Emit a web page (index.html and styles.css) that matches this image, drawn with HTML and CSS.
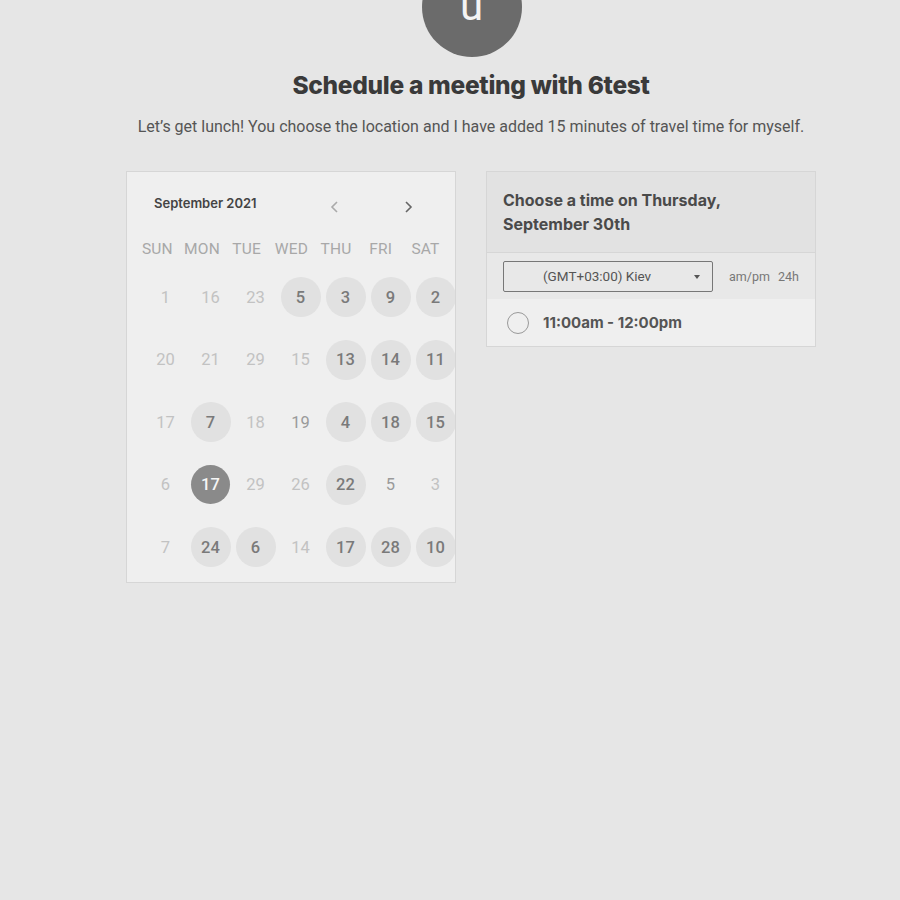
FILE: index.html
```html
<!DOCTYPE html>
<html>
<head>
<meta charset="utf-8">
<link rel="stylesheet" href="styles.css">
</head>
<body>
<div class="page">
  <div class="avatar"><span>u</span></div>
  <h1 class="title">Schedule a meeting with 6test</h1>
  <p class="subtitle">Let’s get lunch! You choose the location and I have added 15 minutes of travel time for myself.</p>
  <div class="cols">
    <div class="cal">
      <div class="cal-head">
        <span class="month">September 2021</span>
        <span class="arrow prev"><svg width="12" height="14" viewBox="0 0 12 14"><path d="M8 2 L3 7 L8 12" fill="none" stroke="#aaa" stroke-width="1.6"/></svg></span>
        <span class="arrow next"><svg width="12" height="14" viewBox="0 0 12 14"><path d="M4 2 L9 7 L4 12" fill="none" stroke="#666" stroke-width="1.6"/></svg></span>
      </div>
      <div class="dow">
        <span>SUN</span><span>MON</span><span>TUE</span><span>WED</span><span>THU</span><span>FRI</span><span>SAT</span>
      </div>
      <div class="days">
        <span class="d off">1</span><span class="d off">16</span><span class="d off">23</span><span class="d av">5</span><span class="d av">3</span><span class="d av">9</span><span class="d av">2</span>
        <span class="d off">20</span><span class="d off">21</span><span class="d off">29</span><span class="d off">15</span><span class="d av">13</span><span class="d av">14</span><span class="d av">11</span>
        <span class="d off">17</span><span class="d av">7</span><span class="d off">18</span><span class="d mid">19</span><span class="d av">4</span><span class="d av">18</span><span class="d av">15</span>
        <span class="d off">6</span><span class="d sel">17</span><span class="d off">29</span><span class="d off">26</span><span class="d av">22</span><span class="d mid">5</span><span class="d off">3</span>
        <span class="d off">7</span><span class="d av">24</span><span class="d av">6</span><span class="d off">14</span><span class="d av">17</span><span class="d av">28</span><span class="d av">10</span>
      </div>
    </div>
    <div class="times">
      <div class="times-head">Choose a time on Thursday,<br>September 30th</div>
      <div class="tz-row">
        <div class="tz-select"><span>(GMT+03:00) Kiev</span><span class="caret"></span></div>
        <span class="fmt">am/pm</span><span class="fmt">24h</span>
      </div>
      <div class="slot">
        <span class="radio"></span>
        <span class="slot-text">11:00am - 12:00pm</span>
      </div>
    </div>
  </div>
</div>
</body>
</html>
```
FILE: styles.css
```css
html, body {
  margin: 0;
  padding: 0;
  background: #e6e6e6;
  height: 100%;
}
body {
  font-family: Roboto, "Liberation Sans", sans-serif;
}
.page {
  width: 900px;
  display: flex;
  flex-direction: column;
  align-items: center;
}
.avatar {
  width: 100px;
  height: 100px;
  border-radius: 50%;
  background: #6b6b6b;
  margin-top: -43px;
  margin-left: 43px;
  display: flex;
  justify-content: center;
  align-items: flex-start;
}
.avatar span {
  color: #f4f4f4;
  font-family: Roboto, sans-serif;
  font-size: 42px;
  line-height: 1;
  margin-top: 28px;
}
.title {
  margin: 13px 0 0 0;
  font-family: Inter, sans-serif;
  font-weight: 800;
  font-size: 24.5px;
  line-height: 30px;
  color: #3a3a3a;
  letter-spacing: -0.3px;
  margin-left: 42px;
}
.subtitle {
  margin: 17px 0 0 0;
  font-size: 16px;
  line-height: 20px;
  color: #555;
  margin-left: 42px;
}
.cols {
  display: flex;
  gap: 30px;
  margin-top: 34px;
  margin-left: 42px;
  align-items: flex-start;
}
.cal {
  width: 328px;
  height: 410px;
  background: #efefef;
  border: 1px solid #d6d6d6;
  box-sizing: content-box;
  overflow: hidden;
}
.cal-head {
  display: flex;
  align-items: center;
  height: 30px;
  margin-top: 16px;
  padding-left: 27px;
}
.month {
  font-family: Inter, sans-serif;
  font-weight: 600;
  font-size: 13px;
  color: #444;
  width: 175px;
}
.arrow {
  display: flex;
  width: 12px;
  margin-top: 7px;
}
.prev { margin-left: 0; }
.next { margin-left: 61px; }
.dow {
  display: grid;
  grid-template-columns: repeat(7, 44.7px);
  margin-left: 8px;
  margin-top: 19px;
  height: 24px;
  align-items: center;
}
.dow span {
  text-align: center;
  font-size: 15.5px;
  color: #a8a8a8;
  letter-spacing: 0.2px;
}
.days {
  display: grid;
  grid-template-columns: repeat(7, 45px);
  grid-auto-rows: 62.5px;
  margin-left: 16px;
  margin-top: 5px;
  width: 320px;
}
.d {
  align-self: center;
  justify-self: center;
  width: 40px;
  height: 40px;
  border-radius: 50%;
  display: flex;
  align-items: center;
  justify-content: center;
  font-size: 16.5px;
}
.off { color: #c2c2c2; }
.mid { color: #9a9a9a; }
.av {
  background: #e1e1e1;
  color: #7a7a7a;
  font-weight: 500;
}
.sel {
  background: #8a8a8a;
  color: #f6f6f6;
  font-weight: 500;
  width: 39px;
  height: 39px;
}
.times {
  width: 328px;
  border: 1px solid #d6d6d6;
  background: #efefef;
}
.times-head {
  background: #e2e2e2;
  padding: 16px 16px 16px 16px;
  font-family: Inter, sans-serif;
  font-weight: 700;
  font-size: 16px;
  line-height: 24px;
  color: #4a4a4a;
  border-bottom: 1px solid #d6d6d6;
}
.tz-row {
  background: #e8e8e8;
  height: 46px;
  display: flex;
  align-items: center;
  padding-left: 16px;
}
.tz-select {
  width: 208px;
  height: 29px;
  border: 1px solid #777;
  border-radius: 2px;
  box-sizing: content-box;
  display: flex;
  align-items: center;
  position: relative;
  font-size: 13.5px;
  color: #555;
}
.tz-select span:first-child {
  margin-left: 39px;
}
.caret {
  position: absolute;
  right: 12px;
  top: 13px;
  width: 0;
  height: 0;
  border-left: 3.5px solid transparent;
  border-right: 3.5px solid transparent;
  border-top: 4px solid #555;
}
.fmt {
  font-size: 12.5px;
  color: #777;
  margin-left: 16px;
}
.fmt + .fmt { margin-left: 8px; }
.slot {
  height: 47px;
  display: flex;
  align-items: center;
  padding-left: 20px;
}
.radio {
  width: 20px;
  height: 20px;
  border: 1.5px solid #999;
  border-radius: 50%;
}
.slot-text {
  margin-left: 14px;
  font-family: Inter, sans-serif;
  font-weight: 700;
  font-size: 15px;
  color: #555;
}
```
